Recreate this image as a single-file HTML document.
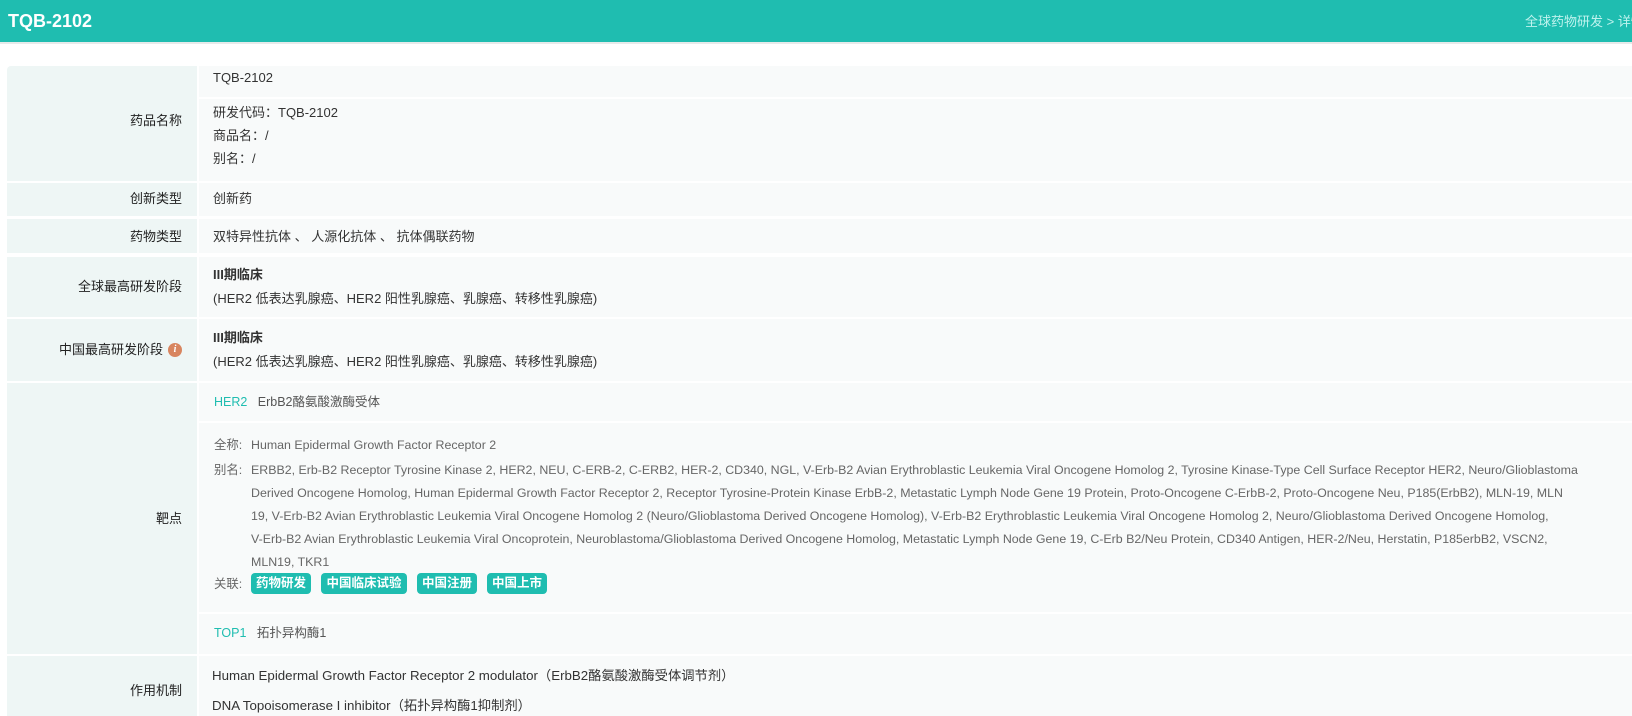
<!DOCTYPE html>
<html><head><meta charset="utf-8"><style>
*{margin:0;padding:0;box-sizing:border-box}
body{width:1632px;height:716px;overflow:hidden;background:#fff;font-family:"Liberation Sans","Noto Sans CJK SC",sans-serif;color:#333;font-size:13px;position:relative}
.hdr{position:absolute;left:0;top:0;width:1632px;height:44px;background:#1fbdb0;border-bottom:2px solid #e6eaea}
.hdr .t{position:absolute;left:8px;top:11px;font-size:18px;font-weight:bold;color:#fff}
.hdr .b{position:absolute;left:1525px;top:11px;font-size:13px;color:#bff3ee;white-space:nowrap}
.l{position:absolute;left:7px;width:190px;background:#eef6f5}
.v{position:absolute;left:199px;width:1433px;background:#f8fafa}
.tx{position:absolute;white-space:nowrap;line-height:16px}
.lb{position:absolute;white-space:nowrap;line-height:16px;right:1450px;text-align:right;color:#222}
.g{color:#666;font-size:12.4px}
.tag{position:absolute;top:573px;height:21px;background:#1fbdb0;color:#fff;font-weight:bold;font-size:12.5px;line-height:21px;text-align:center;border-radius:4px}
.c{color:#1fbdb0}
</style></head><body>
<div class="hdr"><div class="t">TQB-2102</div><div class="b">全球药物研发 &gt; 详情</div></div>

<div class="l" style="top:66px;height:115px;border-radius:4px 0 0 0"></div><div class="lb" style="top:113px">药品名称</div>
<div class="v" style="top:66px;height:31px"></div>
<div class="v" style="top:99px;height:82px"></div>
<div class="tx" style="left:213px;top:70px">TQB-2102</div>
<div class="tx" style="left:213px;top:105px">研发代码：TQB-2102</div>
<div class="tx" style="left:213px;top:128px">商品名：/</div>
<div class="tx" style="left:213px;top:151px">别名：/</div>

<div class="l" style="top:183px;height:33px"></div><div class="lb" style="top:191px">创新类型</div>
<div class="v" style="top:183px;height:33px"></div><div class="tx" style="left:213px;top:191px">创新药</div>

<div class="l" style="top:219px;height:34px"></div><div class="lb" style="top:229px">药物类型</div>
<div class="v" style="top:219px;height:34px"></div><div class="tx" style="left:213px;top:229px">双特异性抗体 、 人源化抗体 、 抗体偶联药物</div>

<div class="l" style="top:257px;height:60px"></div><div class="lb" style="top:279px">全球最高研发阶段</div>
<div class="v" style="top:257px;height:60px"></div>
<div class="tx" style="left:213px;top:267px;font-weight:bold">III期临床</div>
<div class="tx" style="left:213px;top:291px">(HER2 低表达乳腺癌、HER2 阳性乳腺癌、乳腺癌、转移性乳腺癌)</div>

<div class="l" style="top:319px;height:62px"></div><div class="lb" style="top:342px;right:1469px">中国最高研发阶段</div>
<div style="position:absolute;left:168px;top:343px;width:14px;height:14px;border-radius:50%;background:#d8855f;color:#fff;font-size:10px;font-style:italic;font-weight:bold;text-align:center;line-height:14px;font-family:'Liberation Serif',serif">i</div>
<div class="v" style="top:319px;height:62px"></div>
<div class="tx" style="left:213px;top:330px;font-weight:bold">III期临床</div>
<div class="tx" style="left:213px;top:354px">(HER2 低表达乳腺癌、HER2 阳性乳腺癌、乳腺癌、转移性乳腺癌)</div>

<div class="l" style="top:383px;height:271px"></div><div class="lb" style="top:511px">靶点</div>
<div class="v" style="top:383px;height:38px"></div>
<div class="v" style="top:423px;height:189px"></div>
<div class="v" style="top:614px;height:40px"></div>
<div class="tx" style="left:214px;top:394px;font-size:12.5px"><span class="c">HER2</span>&nbsp;&nbsp; <span style="color:#555">ErbB2酪氨酸激酶受体</span></div>
<div class="tx g" style="left:214px;top:437px">全称:</div>
<div class="tx g" style="left:251px;top:437px">Human Epidermal Growth Factor Receptor 2</div>
<div class="tx g" style="left:214px;top:462px">别名:</div>
<div class="tx g" style="left:251px;top:462px">ERBB2, Erb-B2 Receptor Tyrosine Kinase 2, HER2, NEU, C-ERB-2, C-ERB2, HER-2, CD340, NGL, V-Erb-B2 Avian Erythroblastic Leukemia Viral Oncogene Homolog 2, Tyrosine Kinase-Type Cell Surface Receptor HER2, Neuro/Glioblastoma</div>
<div class="tx g" style="left:251px;top:485px">Derived Oncogene Homolog, Human Epidermal Growth Factor Receptor 2, Receptor Tyrosine-Protein Kinase ErbB-2, Metastatic Lymph Node Gene 19 Protein, Proto-Oncogene C-ErbB-2, Proto-Oncogene Neu, P185(ErbB2), MLN-19, MLN</div>
<div class="tx g" style="left:251px;top:508px">19, V-Erb-B2 Avian Erythroblastic Leukemia Viral Oncogene Homolog 2 (Neuro/Glioblastoma Derived Oncogene Homolog), V-Erb-B2 Erythroblastic Leukemia Viral Oncogene Homolog 2, Neuro/Glioblastoma Derived Oncogene Homolog,</div>
<div class="tx g" style="left:251px;top:531px">V-Erb-B2 Avian Erythroblastic Leukemia Viral Oncoprotein, Neuroblastoma/Glioblastoma Derived Oncogene Homolog, Metastatic Lymph Node Gene 19, C-Erb B2/Neu Protein, CD340 Antigen, HER-2/Neu, Herstatin, P185erbB2, VSCN2,</div>
<div class="tx g" style="left:251px;top:554px">MLN19, TKR1</div>
<div class="tx g" style="left:214px;top:576px">关联:</div>
<div class="tag" style="left:251px;width:60px">药物研发</div>
<div class="tag" style="left:321px;width:86px">中国临床试验</div>
<div class="tag" style="left:417px;width:60px">中国注册</div>
<div class="tag" style="left:487px;width:60px">中国上市</div>
<div class="tx" style="left:214px;top:625px;font-size:12.5px"><span class="c">TOP1</span>&nbsp;&nbsp; <span style="color:#555">拓扑异构酶1</span></div>

<div class="l" style="top:656px;height:60px"></div><div class="lb" style="top:683px">作用机制</div>
<div class="v" style="top:656px;height:60px"></div>
<div class="tx" style="left:212px;top:668px;font-size:13.3px">Human Epidermal Growth Factor Receptor 2 modulator（ErbB2酪氨酸激酶受体调节剂）</div>
<div class="tx" style="left:212px;top:698px;font-size:13.3px">DNA Topoisomerase I inhibitor（拓扑异构酶1抑制剂）</div>
</body></html>
